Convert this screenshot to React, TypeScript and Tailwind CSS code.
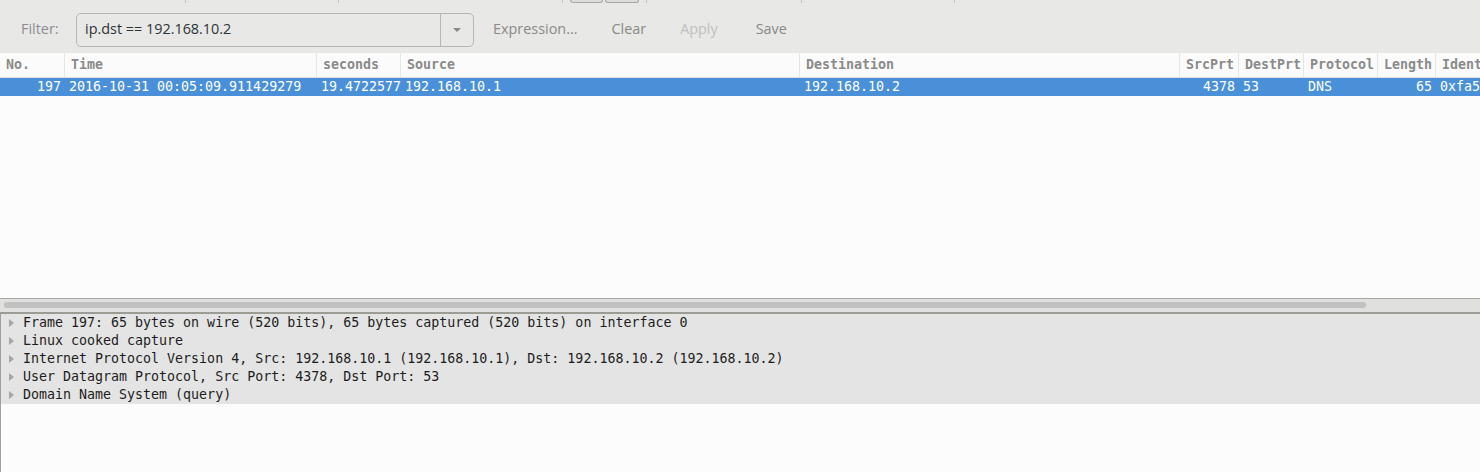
import { ReactNode } from "react";

const mono = "font-['DejaVu_Sans_Mono',monospace]";

const columns = [
  { title: "No.", w: "w-[65px]", value: "197", right: true },
  { title: "Time", w: "w-[252px]", value: "2016-10-31 00:05:09.911429279" },
  { title: "seconds", w: "w-[84px]", value: "19.4722577" },
  { title: "Source", w: "w-[399px]", value: "192.168.10.1" },
  { title: "Destination", w: "w-[380px]", value: "192.168.10.2" },
  { title: "SrcPrt", w: "w-[59px]", value: "4378", right: true },
  { title: "DestPrt", w: "w-[65px]", value: "53" },
  { title: "Protocol", w: "w-[74px]", value: "DNS" },
  { title: "Length", w: "w-[58px]", value: "65", right: true },
  { title: "Identification", w: "flex-1", value: "0xfa5b (64091)" },
];

const tree = [
  "Frame 197: 65 bytes on wire (520 bits), 65 bytes captured (520 bits) on interface 0",
  "Linux cooked capture",
  "Internet Protocol Version 4, Src: 192.168.10.1 (192.168.10.1), Dst: 192.168.10.2 (192.168.10.2)",
  "User Datagram Protocol, Src Port: 4378, Dst Port: 53",
  "Domain Name System (query)",
];

function ToolButton({ children, disabled }: { children: ReactNode; disabled?: boolean }) {
  return (
    <div className={`px-[17px] ${disabled ? "text-[#c0c0bd]" : "text-[#888a85]"}`}>
      {children}
    </div>
  );
}

export default function App() {
  return (
    <div className="w-[1480px] h-[472px] flex flex-col bg-[#e8e8e7] overflow-hidden">
      {/* Tab strip remnants */}
      <div className="h-[4px] flex items-start">
        <div className="w-[186px] h-[3px] border-r border-[#c4c4c0]" />
        <div className="w-[153px] h-[3px] border-r border-[#c4c4c0]" />
        <div className="w-[224px] h-[3px] border-r border-[#c4c4c0]" />
        <div className="ml-[7px] w-[33px] h-[3px] border border-t-0 border-[#a8a8a4] rounded-b-[3px] bg-[#dcdcda]" />
        <div className="ml-[2px] w-[34px] h-[3px] border border-t-0 border-[#a8a8a4] rounded-b-[3px] bg-[#dcdcda]" />
        <div className="w-[8px] h-[3px] border-r border-[#c4c4c0]" />
        <div className="w-[155px] h-[3px] border-r border-[#c4c4c0]" />
        <div className="w-[153px] h-[3px] border-r border-[#c4c4c0]" />
      </div>

      {/* Filter bar */}
      <div className="h-[49px] flex items-start pt-[9px] font-['Open_Sans',sans-serif] text-[14.4px]">
        <div className="w-[76px] pl-[21px] h-[34px] pb-[3px] flex items-center text-[#8b8e8f]">Filter:</div>
        <div className="w-[398px] h-[34px] flex border border-[#b6b6b2] rounded-[5px] bg-[#e8e8e7]">
          <div className="flex-1 flex items-center pl-[8px] pb-[3px] text-[#2e3436]">ip.dst == 192.168.10.2</div>
          <div className="w-[33px] border-l border-[#b6b6b2] flex items-center justify-center">
            <svg width="10" height="6" viewBox="0 0 10 6">
              <path d="M1 1h8L5 5z" fill="#888a85" />
            </svg>
          </div>
        </div>
        <div className="h-[34px] pb-[3px] flex items-center ml-[2px]">
          <ToolButton>Expression...</ToolButton>
          <ToolButton>Clear</ToolButton>
          <ToolButton disabled>Apply</ToolButton>
          <div className="ml-[4px]">
            <ToolButton>Save</ToolButton>
          </div>
        </div>
      </div>

      {/* Packet list */}
      <div className={`h-[245px] flex flex-col bg-[#fcfcfc] ${mono} text-[13.3px]`}>
        <div className="h-[25px] flex bg-[#fbfbfb] border-b border-[#dedede]">
          {columns.map((c) => (
            <div
              key={c.title}
              className={`${c.w} shrink-0 overflow-hidden whitespace-nowrap border-r border-[#e6e6e6] pl-[6px] flex items-center font-bold text-[#8a8a8a] last:border-r-0`}
            >
              {c.title}
            </div>
          ))}
        </div>
        <div className="h-[18px] flex bg-[#4a90d9] text-white">
          {columns.map((c) => (
            <div
              key={c.title}
              className={`${c.w} shrink-0 overflow-hidden whitespace-nowrap flex items-center ${c.right ? "justify-end pr-[4px]" : "pl-[4px]"}`}
            >
              {c.value}
            </div>
          ))}
        </div>
        <div className="flex-1" />
      </div>

      {/* Horizontal scrollbar */}
      <div className="h-[16px] flex flex-col bg-[#fcfcfc]">
        <div className="h-[1px] bg-[#a8a8a6]" />
        <div className="flex-1 bg-[#e0e0de] px-[4px] pt-[3px]">
          <div className="w-[1362px] h-[6px] rounded-full bg-[#c0c1c0]" />
        </div>
        <div className="h-[2px] bg-[#9c9c96]" />
      </div>

      {/* Packet details */}
      <div className={`flex-1 flex flex-col bg-[#fcfcfc] border-l border-[#a0a0a0] ${mono} text-[13.3px] text-[#1c1c1c]`}>
        {tree.map((t) => (
          <div key={t} className="h-[18px] flex items-center bg-[#e4e4e4] whitespace-nowrap">
            <div className="w-[22px] flex items-center pl-[8px]">
              <svg width="5" height="8" viewBox="0 0 5 8">
                <path d="M0 0l5 4-5 4z" fill="#a6a6a6" />
              </svg>
            </div>
            {t}
          </div>
        ))}
      </div>
    </div>
  );
}
